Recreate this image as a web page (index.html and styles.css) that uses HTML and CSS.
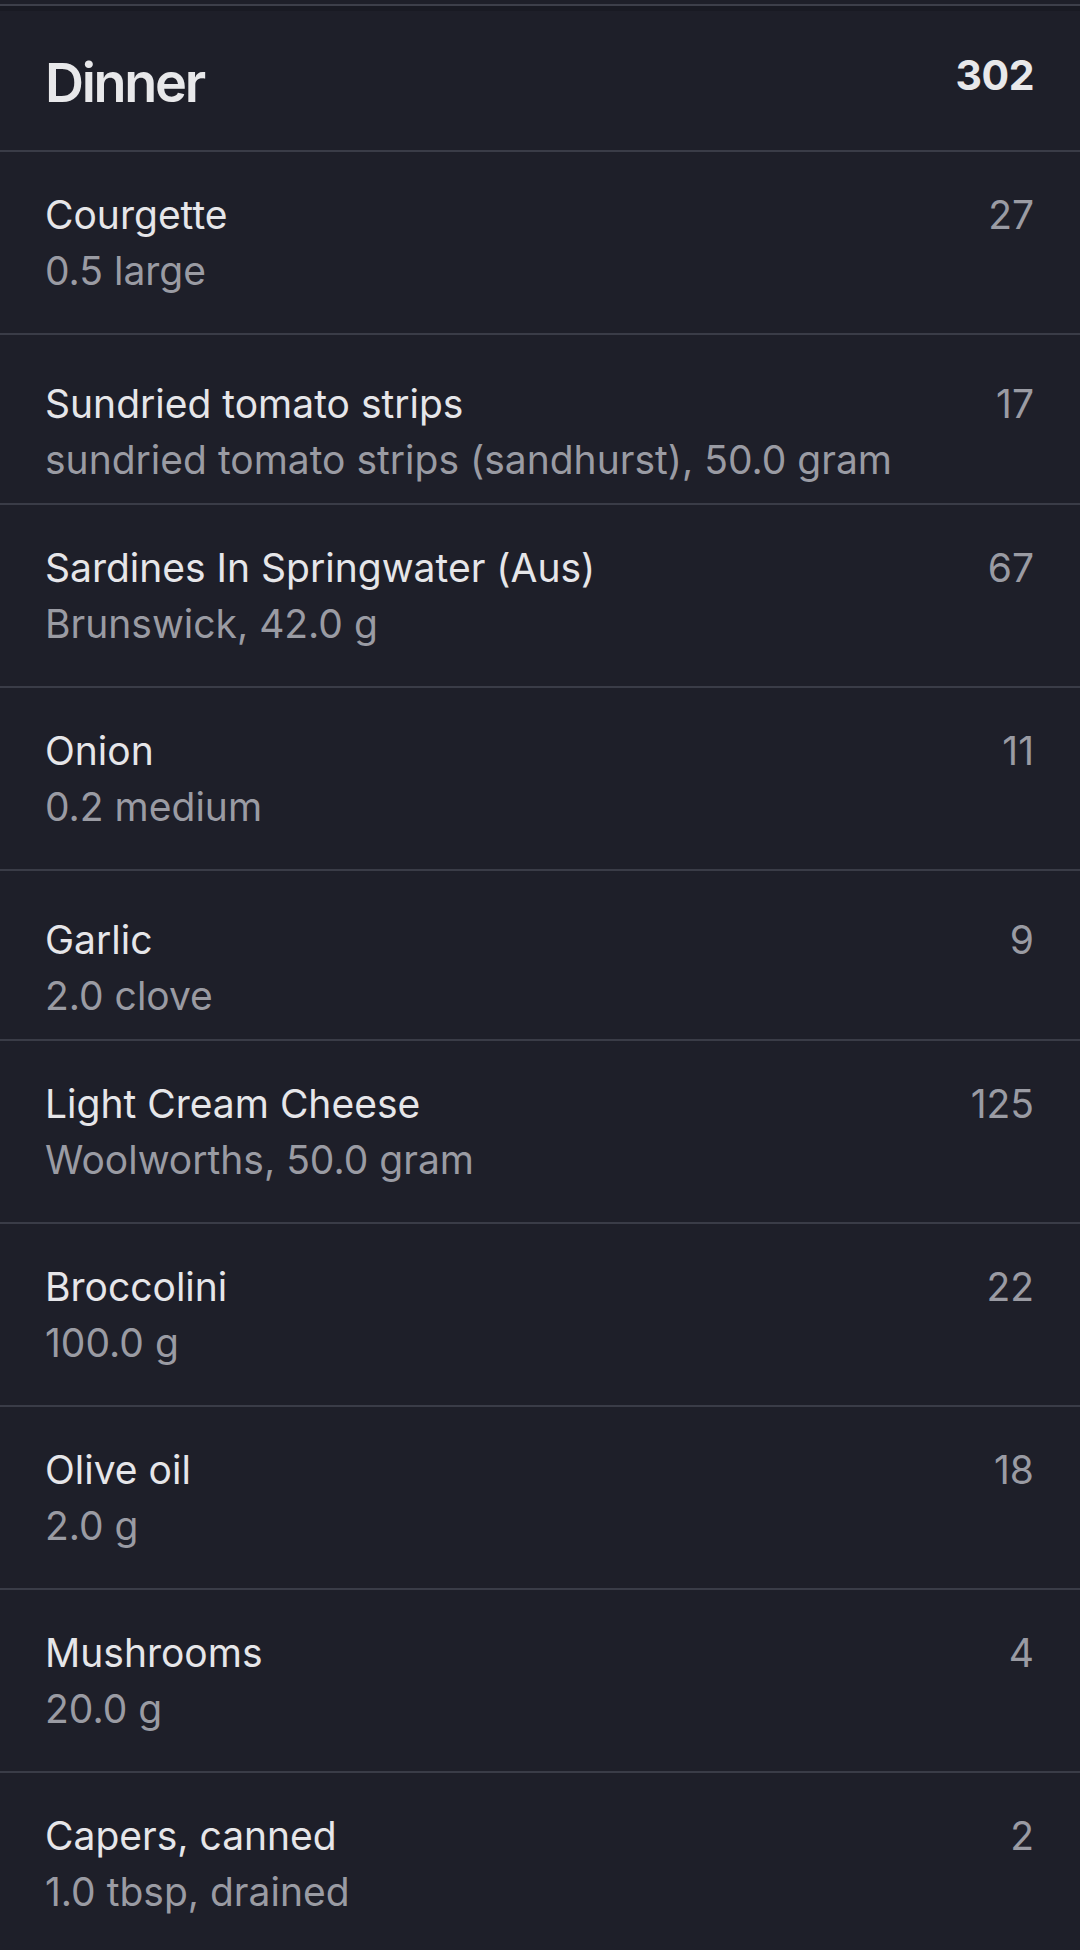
FILE: index.html
```html
<!DOCTYPE html>
<html lang="en">
<head>
<meta charset="utf-8">
<title>Dinner</title>
<link rel="stylesheet" href="styles.css">
</head>
<body>
<div class="screen">
  <div class="top-edge"></div>
  <section class="meal">
    <header class="meal-header">
      <h1 class="meal-title">Dinner</h1>
      <span class="meal-total">302</span>
    </header>
    <ul class="items">
      <li class="item">
        <div class="item-text"><div class="item-name">Courgette</div><div class="item-detail">0.5 large</div></div>
        <span class="item-cal">27</span>
      </li>
      <li class="item item--tight">
        <div class="item-text"><div class="item-name">Sundried tomato strips</div><div class="item-detail">sundried tomato strips (sandhurst), 50.0 gram</div></div>
        <span class="item-cal">17</span>
      </li>
      <li class="item">
        <div class="item-text"><div class="item-name">Sardines In Springwater (Aus)</div><div class="item-detail">Brunswick, 42.0 g</div></div>
        <span class="item-cal">67</span>
      </li>
      <li class="item">
        <div class="item-text"><div class="item-name">Onion</div><div class="item-detail">0.2 medium</div></div>
        <span class="item-cal">11</span>
      </li>
      <li class="item item--tight">
        <div class="item-text"><div class="item-name">Garlic</div><div class="item-detail">2.0 clove</div></div>
        <span class="item-cal">9</span>
      </li>
      <li class="item">
        <div class="item-text"><div class="item-name">Light Cream Cheese</div><div class="item-detail">Woolworths, 50.0 gram</div></div>
        <span class="item-cal">125</span>
      </li>
      <li class="item">
        <div class="item-text"><div class="item-name">Broccolini</div><div class="item-detail">100.0 g</div></div>
        <span class="item-cal">22</span>
      </li>
      <li class="item">
        <div class="item-text"><div class="item-name">Olive oil</div><div class="item-detail">2.0 g</div></div>
        <span class="item-cal">18</span>
      </li>
      <li class="item">
        <div class="item-text"><div class="item-name">Mushrooms</div><div class="item-detail">20.0 g</div></div>
        <span class="item-cal">4</span>
      </li>
      <li class="item">
        <div class="item-text"><div class="item-name">Capers, canned</div><div class="item-detail">1.0 tbsp, drained</div></div>
        <span class="item-cal">2</span>
      </li>
    </ul>
  </section>
</div>
</body>
</html>
```
FILE: styles.css
```css
html, body {
  margin: 0;
  padding: 0;
  background: #1e1f29;
}

body {
  font-family: Inter, "Noto Sans", "Liberation Sans", sans-serif;
  color: #e6e6e9;
  -webkit-font-smoothing: antialiased;
}

.screen {
  width: 1080px;
  height: 1950px;
  overflow: hidden;
  background: #1e1f29;
}

.top-edge {
  margin-top: 4px;
  height: 5px;
  border-top: 2px solid #3d3f4a;
  background: #191a23;
}

.meal-header {
  display: flex;
  justify-content: space-between;
  align-items: flex-start;
  padding: 40px 46px 35px 45px;
}

.meal-title {
  margin: 0;
  font-size: 54px;
  line-height: 64px;
  font-weight: 600;
  color: #e8e8ea;
  letter-spacing: -2.3px;
}

.meal-total {
  font-size: 41px;
  line-height: 48px;
  font-weight: 700;
  color: #e8e8ea;
  letter-spacing: -0.5px;
}

.items {
  list-style: none;
  margin: 0;
  padding: 0;
}

.item {
  display: flex;
  justify-content: space-between;
  align-items: flex-start;
  border-top: 2px solid #3a3c47;
  padding: 35px 46px 34px 45px;
}

.item--tight {
  padding-top: 41px;
  padding-bottom: 15px;
}

.item-name,
.item-detail,
.item-cal {
  font-size: 39px;
  line-height: 56px;
  font-weight: 400;
}

.item-name {
  color: #e6e6e9;
}

.item-detail {
  color: #9a9ba3;
}

.item-cal {
  color: #9a9ba3;
}
```
